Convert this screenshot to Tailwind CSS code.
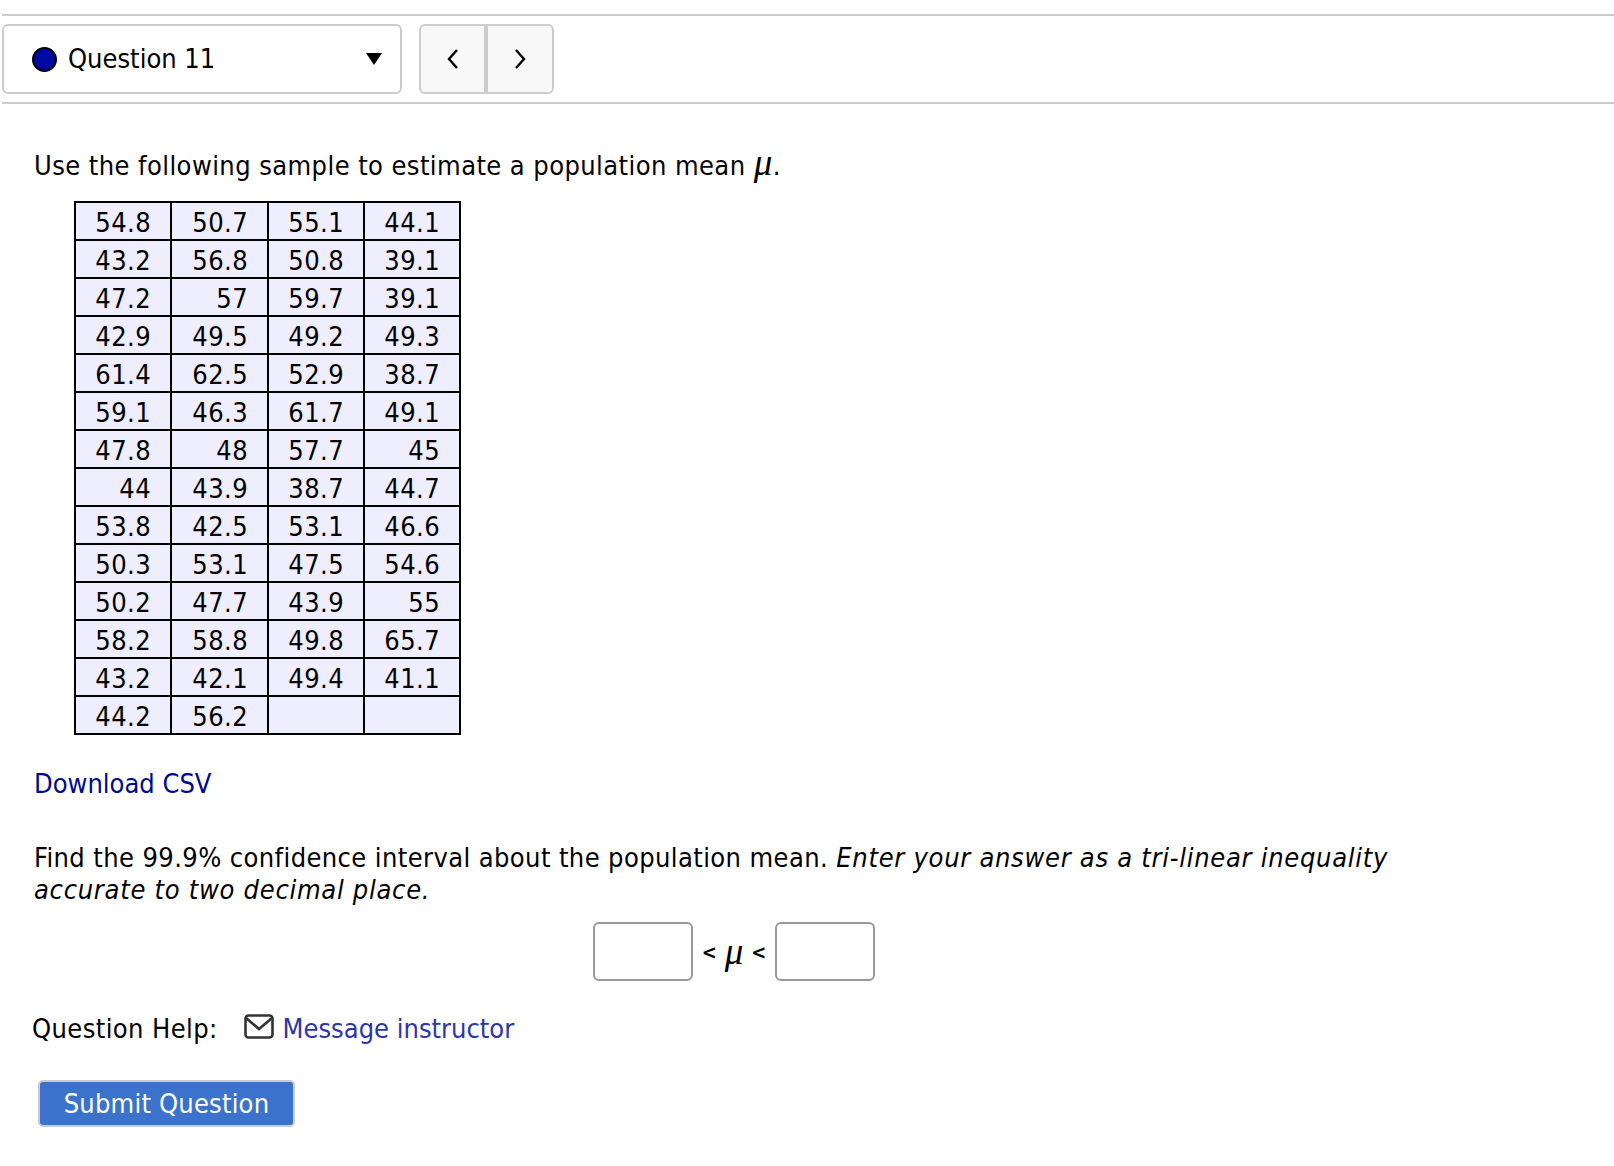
<!DOCTYPE html>
<html lang="en">
<head>
  <meta charset="UTF-8" />
  <title>Question 11</title>
  <script src="https://cdn.jsdelivr.net/npm/@tailwindcss/browser@4"></script>
</head>
<body class="bg-white text-black font-['DejaVu_Sans',sans-serif] font-stretch-condensed text-[27px] leading-[32px]">
  <div class="ml-[2px] mt-[14px] h-[90px] border-y-2 border-[#cccccc] flex items-start gap-[17px] pt-[8px]">
    <div class="w-[400px] h-[70px] border-2 border-[#cccccc] rounded-[6px] flex items-center pl-[28px] pr-[18px]">
      <span class="w-[25px] h-[25px] rounded-full bg-[#000aa0] border-2 border-black"></span>
      <span class="ml-[11px] flex-1">Question 11</span>
      <svg width="16" height="12" viewBox="0 0 16 12"><path d="M0 0H16L8 12Z" fill="#000"/></svg>
    </div>
    <div class="w-[135px] h-[70px] border-2 border-[#cccccc] rounded-[6px] flex bg-[#f8f8f8]">
      <div class="w-[67px] flex items-center justify-center border-r-4 border-[#cccccc]">
        <svg width="14" height="22" viewBox="0 0 14 22" fill="none" stroke="#000" stroke-width="2.4"><path d="M11 2 3 11l8 9"/></svg>
      </div>
      <div class="flex-1 flex items-center justify-center">
        <svg width="14" height="22" viewBox="0 0 14 22" fill="none" stroke="#000" stroke-width="2.4"><path d="m3 2 8 9-8 9"/></svg>
      </div>
    </div>
  </div>

  <div class="pl-[34px] pt-[46px]">
    <p class="tracking-[0.42px]">Use the following sample to estimate a population mean <i class="font-['Liberation_Serif',serif] text-[37px] leading-[16px]">μ</i>.</p>

    <table class="ml-[40px] mt-[19px] border-collapse border-2 border-black bg-[#eeeeff] text-right tracking-[0.4px]">
      <tbody class="[&_td]:border-2 [&_td]:border-black [&_td]:pr-[19px] [&_td]:pt-[4px] [&_tr]:h-[38px]">
        <tr><td class="w-[96px]">54.8</td><td class="w-[97px]">50.7</td><td class="w-[96px]">55.1</td><td class="w-[96px]">44.1</td></tr>
        <tr><td>43.2</td><td>56.8</td><td>50.8</td><td>39.1</td></tr>
        <tr><td>47.2</td><td>57</td><td>59.7</td><td>39.1</td></tr>
        <tr><td>42.9</td><td>49.5</td><td>49.2</td><td>49.3</td></tr>
        <tr><td>61.4</td><td>62.5</td><td>52.9</td><td>38.7</td></tr>
        <tr><td>59.1</td><td>46.3</td><td>61.7</td><td>49.1</td></tr>
        <tr><td>47.8</td><td>48</td><td>57.7</td><td>45</td></tr>
        <tr><td>44</td><td>43.9</td><td>38.7</td><td>44.7</td></tr>
        <tr><td>53.8</td><td>42.5</td><td>53.1</td><td>46.6</td></tr>
        <tr><td>50.3</td><td>53.1</td><td>47.5</td><td>54.6</td></tr>
        <tr><td>50.2</td><td>47.7</td><td>43.9</td><td>55</td></tr>
        <tr><td>58.2</td><td>58.8</td><td>49.8</td><td>65.7</td></tr>
        <tr><td>43.2</td><td>42.1</td><td>49.4</td><td>41.1</td></tr>
        <tr><td>44.2</td><td>56.2</td><td></td><td></td></tr>
      </tbody>
    </table>

    <p class="mt-[33px]"><a class="text-[#000a8c]">Download CSV</a></p>

    <p class="mt-[42px] w-[1400px] tracking-[0.4px]">Find the 99.9% confidence interval about the population mean. <i class="tracking-[0.72px]">Enter your answer as a tri-linear inequality accurate to two decimal place.</i></p>

    <div class="mt-[16px] ml-[559px] flex items-center">
      <span class="w-[100px] h-[59px] border-2 border-[#999999] rounded-[6px]"></span>
      <span class="w-[82px] flex justify-center items-center gap-[8px] text-[20px] font-semibold"><span>&lt;</span><i class="font-['Liberation_Serif',serif] font-normal text-[37px] leading-none">μ</i><span>&lt;</span></span>
      <span class="w-[100px] h-[59px] border-2 border-[#999999] rounded-[6px]"></span>
    </div>

    <div class="mt-[32px] -ml-[2px] flex items-center">
      <span class="tracking-[0.4px]">Question Help:</span>
      <svg class="ml-[26px] -mt-[4px]" width="30" height="26" viewBox="0 0 30 26" fill="none" stroke="#333" stroke-width="2.6"><rect x="1.5" y="1.5" width="27" height="22" rx="3"/><path d="m2 4 13 11L28 4"/></svg>
      <a class="ml-[9px] text-[#2e35a8]">Message instructor</a>
    </div>

    <button class="mt-[35px] ml-[4px] w-[257px] h-[47px] rounded-[5px] border-2 border-[#cccccc] bg-[#3b73cc] text-white tracking-[0.2px]">Submit Question</button>
  </div>
</body>
</html>
